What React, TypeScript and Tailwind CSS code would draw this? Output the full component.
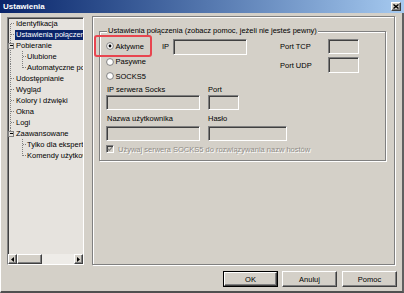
import React from "react";

const raised =
  "border border-t-white border-l-white border-b-[#404040] border-r-[#404040] shadow-[inset_-1px_-1px_0_#808080] bg-[#d4d0c8]";
const sunken =
  "border border-t-[#808080] border-l-[#808080] border-b-white border-r-white shadow-[inset_1px_1px_0_#404040] bg-[#d4d0c8]";
const etched = "border border-[#808080] shadow-[inset_1px_1px_0_#fff,1px_1px_0_#fff]";

const treeItems: { t: string; l: number; sel?: boolean }[] = [
  { t: "Identyfikacja", l: 0 },
  { t: "Ustawienia połączenia", l: 0, sel: true },
  { t: "Pobieranie", l: 0 },
  { t: "Ulubione", l: 1 },
  { t: "Automatyczne pobieranie", l: 1 },
  { t: "Udostępnianie", l: 0 },
  { t: "Wygląd", l: 0 },
  { t: "Kolory i dźwięki", l: 0 },
  { t: "Okna", l: 0 },
  { t: "Logi", l: 0 },
  { t: "Zaawansowane", l: 0 },
  { t: "Tylko dla ekspertów", l: 1 },
  { t: "Komendy użytkownika", l: 1 },
];

function Radio({ checked }: { checked?: boolean }) {
  return (
    <svg width="8" height="8" viewBox="0 0 8 8" className="shrink-0">
      <circle cx="4" cy="4" r="3.4" fill="#fff" stroke="#808080" strokeWidth="1" />
      {checked && <circle cx="4" cy="4" r="1.4" fill="#000" />}
    </svg>
  );
}

function TreeLines() {
  const c = (i: number) => 5.5 + 11 * i;
  const rootRows = [0, 1, 2, 5, 6, 7, 8, 9, 10];
  const childRows = [3, 4, 11, 12];
  const boxes = [2, 10];
  return (
    <svg className="absolute left-0 top-0" width="76" height="236" viewBox="0 0 76 236">
      <g stroke="#808080" strokeWidth="1" strokeDasharray="1 1" shapeRendering="crispEdges">
        <line x1="2.5" y1={c(0)} x2="2.5" y2={c(10)} />
        {rootRows.map((r) => (
          <line key={r} x1="3" y1={c(r)} x2="7" y2={c(r)} />
        ))}
        <line x1="14.5" y1={c(2) + 5} x2="14.5" y2={c(4)} />
        <line x1="14.5" y1={c(10) + 5} x2="14.5" y2={c(12)} />
        {childRows.map((r) => (
          <line key={r} x1="15" y1={c(r)} x2="19" y2={c(r)} />
        ))}
      </g>
      {boxes.map((r) => (
        <g key={r} shapeRendering="crispEdges">
          <rect x="0.5" y={c(r) - 2.5} width="5" height="5" fill="#e6e3de" stroke="#808080" />
          <line x1="1.5" y1={c(r)} x2="4.5" y2={c(r)} stroke="#000" />
        </g>
      ))}
    </svg>
  );
}

function Arrow({ dir }: { dir: "l" | "r" }) {
  return (
    <div className={`${raised} w-[9px] h-[10px] flex items-center justify-center shrink-0`}>
      <svg width="3" height="5" viewBox="0 0 3 5">
        {dir === "l" ? <polygon points="3,0 3,5 0,2.5" fill="#000" /> : <polygon points="0,0 0,5 3,2.5" fill="#000" />}
      </svg>
    </div>
  );
}

function Tree() {
  return (
    <div className={`w-[77px] h-[248px] flex flex-col border border-t-[#808080] border-l-[#808080] border-b-white border-r-white shadow-[inset_1px_1px_0_#404040] bg-[#e6e3de] mt-[4px] shrink-0`}>
      <div className="relative flex-1 overflow-hidden">
        <TreeLines />
        <div className="relative flex flex-col">
          {treeItems.map((it, i) => (
            <div key={i} className={`h-[11px] flex items-center whitespace-nowrap ${it.l ? "pl-[18px]" : "pl-[7px]"}`}>
              <span
                className={`h-[10px] leading-[10px] px-[1px] ${it.sel ? "bg-[#0a246a] text-white flex-1" : "text-black"}`}
              >
                {it.t}
              </span>
            </div>
          ))}
        </div>
      </div>
      <div className="h-[10px] flex shrink-0">
        <Arrow dir="l" />
        <div className="flex-1 flex bg-[#eeece8]">
          <div className={`${raised} w-[25px] h-[10px]`} />
        </div>
        <Arrow dir="r" />
      </div>
    </div>
  );
}

function Field({ w, h = 15 }: { w: number; h?: number }) {
  return <div className={sunken} style={{ width: w, height: h }} />;
}

function GroupBox() {
  return (
    <div className={`${etched} relative w-[287px] h-[130px] ml-[6px] mt-[14px]`}>
      <div className="absolute left-[7px] top-[-6px] h-[9px] leading-[9px] px-[1px] bg-[#d4d0c8] whitespace-nowrap">
        Ustawienia połączenia (zobacz pomoc, jeżeli nie jesteś pewny)
      </div>
      <div className="pt-[6px] flex flex-col">
        <div className="flex">
          <div className="flex flex-col pl-[6px]">
            <div className="h-[16px] flex items-center">
              <div className="relative w-[56px] flex items-center gap-[1.5px]">
                <div className="absolute left-[-12px] top-[-7px] w-[58px] h-[22px] rounded-[3px] border-[2px] border-[#e8454f]" />
                <Radio checked />
                <span className="leading-[9px]">Aktywne</span>
              </div>
              <span className="w-[11px] leading-[9px]">IP</span>
              <div className="mt-[2px]">
                <Field w={74} h={16} />
              </div>
            </div>
            <div className="h-[15px] flex items-center gap-[1.5px]">
              <Radio />
              <span className="leading-[9px]">Pasywne</span>
            </div>
            <div className="h-[14px] flex items-center gap-[1.5px]">
              <Radio />
              <span className="leading-[9px]">SOCKS5</span>
            </div>
          </div>
          <div className="ml-[33px] flex flex-col gap-[3px] pt-[1px]">
            <div className="flex items-center">
              <span className="w-[48px] leading-[9px]">Port TCP</span>
              <Field w={31} h={15} />
            </div>
            <div className="flex items-center">
              <span className="w-[48px] leading-[9px]">Port UDP</span>
              <Field w={31} h={16} />
            </div>
          </div>
        </div>
        <div className="pl-[6px] flex flex-col">
          <div className="h-[12px] flex items-center">
            <span className="w-[102px] pl-[1px] leading-[9px]">IP serwera Socks</span>
            <span className="leading-[9px]">Port</span>
          </div>
          <div className="flex gap-[8px]">
            <Field w={94} />
            <Field w={31} />
          </div>
          <div className="h-[16px] flex items-center">
            <span className="w-[102px] pl-[1px] leading-[9px]">Nazwa użytkownika</span>
            <span className="leading-[9px]">Hasło</span>
          </div>
          <div className="flex gap-[8px]">
            <Field w={94} />
            <Field w={79} />
          </div>
          <div className="h-[16px] flex items-center gap-[4px]">
            <div className={`${sunken} w-[8px] h-[8px] flex items-center justify-center`}>
              <svg width="6" height="6" viewBox="0 0 6 6">
                <polyline points="0.8,2.8 2.3,4.4 5.2,1.2" fill="none" stroke="#808080" strokeWidth="1.2" />
              </svg>
            </div>
            <span className="leading-[9px] text-[#8f8c86] [text-shadow:1px_1px_0_#fff] whitespace-nowrap">
              Używaj serwera SOCKS5 do rozwiązywania nazw hostów
            </span>
          </div>
        </div>
      </div>
    </div>
  );
}

function Btn({ label, def }: { label: string; def?: boolean }) {
  return (
    <div className={def ? "border border-black" : ""}>
      <div
        className={`${raised} ${def ? "w-[53px] h-[14px]" : "w-[55px] h-[16px]"} flex items-center justify-center leading-[9px]`}
      >
        {label}
      </div>
    </div>
  );
}

export default function App() {
  return (
    <div className="w-[404px] h-[293px] bg-[#d4d0c8] flex flex-col overflow-hidden font-['Liberation_Sans',Arial,sans-serif] text-[7.5px] text-black">
      <div className="h-[13px] shrink-0 flex items-center justify-between pl-[3px] pr-[3px] bg-gradient-to-r from-[#0a246a] to-[#a6caf0]">
        <span className="text-white font-bold text-[8px] leading-[10px]">Ustawienia</span>
        <div className={`${raised} w-[10px] h-[9px] flex items-center justify-center`}>
          <svg width="6" height="5" viewBox="0 0 6 5">
            <path d="M0.5 0.5 L5.5 4.5 M5.5 0.5 L0.5 4.5" stroke="#000" strokeWidth="1.4" />
          </svg>
        </div>
      </div>
      <div className="flex-1 flex flex-col border-l border-l-white border-r-2 border-r-[#606060] border-b-2 border-b-[#505050]">
        <div className="flex items-start">
          <div className="ml-[6px]">
            <Tree />
          </div>
          <div className={`${etched} ml-[8px] mt-[3px] w-[303px] h-[249px]`}>
            <GroupBox />
          </div>
        </div>
        <div className="mt-[6px] flex justify-end gap-[4px] pr-[5px]">
          <Btn label="OK" def />
          <Btn label="Anuluj" />
          <div className="ml-[1px]">
            <Btn label="Pomoc" />
          </div>
        </div>
      </div>
    </div>
  );
}
